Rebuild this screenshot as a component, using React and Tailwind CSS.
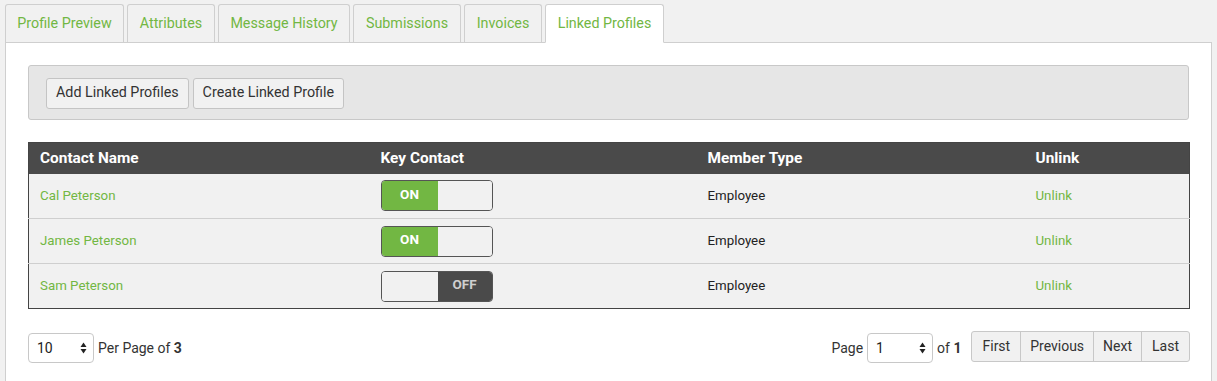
import React from "react";

const GREEN = "text-[#72b743]";

function Tab({ label, active, w }) {
  return (
    <div
      className={
        "h-[38px] flex items-center justify-center rounded-t-[3px] border border-[#cfcfcf] text-[14.3px] " +
        w +
        " " +
        GREEN +
        (active ? " bg-white border-b-white -mb-px relative z-10 h-[39px]" : " bg-[#f1f1f1] border-b-0")
      }
    >
      {label}
    </div>
  );
}

function Toggle({ on }) {
  return (
    <div className="w-[112px] h-[31px] rounded-[4px] border border-[#555] overflow-hidden flex text-[13.5px] font-bold">
      {on ? (
        <>
          <div className="w-[56px] bg-[#72b743] text-white flex items-center justify-center pb-[3px]">ON</div>
          <div className="flex-1 bg-[#f1f1f1]" />
        </>
      ) : (
        <>
          <div className="w-[56px] bg-[#f1f1f1]" />
          <div className="flex-1 bg-[#4a4a4a] text-[#cfcfcf] flex items-center justify-center pb-[3px]">OFF</div>
        </>
      )}
    </div>
  );
}

function Select({ value }) {
  return (
    <div className="w-[66px] h-[30px] border border-[#c8c8c8] rounded-[4px] bg-white flex items-center justify-between pl-[8px] pr-[6px] text-[14px] text-[#222]">
      <span>{value}</span>
      <svg width="7" height="12" viewBox="0 0 7 12">
        <path d="M3.5 0.5 L6.5 5 L0.5 5 Z" fill="#222" />
        <path d="M3.5 11.5 L6.5 7 L0.5 7 Z" fill="#222" />
      </svg>
    </div>
  );
}

const rows = [
  { name: "Cal Peterson", on: true },
  { name: "James Peterson", on: true },
  { name: "Sam Peterson", on: false },
];

export default function App() {
  return (
    <div className="w-[1217px] h-[381px] bg-[#f1f1f1] overflow-hidden font-['Roboto',sans-serif] pt-[4px] pl-[5px] pr-[5px]">
      <div className="flex gap-[3px] items-end">
        <Tab label="Profile Preview" w="w-[119px]" />
        <Tab label="Attributes" w="w-[88px]" />
        <Tab label="Message History" w="w-[132px]" />
        <Tab label="Submissions" w="w-[108px]" />
        <Tab label="Invoices" w="w-[78px]" />
        <Tab label="Linked Profiles" w="w-[119px]" active />
      </div>
      <div className="bg-white border border-[#cfcfcf] w-[1207px] h-[400px] px-[22px] pt-[22px]">
        <div className="h-[55px] bg-[#e6e6e6] border border-[#c8c8c8] rounded-[3px] flex items-center gap-[4px] px-[17px] pt-[1px]">
          <button className="h-[31px] px-[9px] bg-[#f1f1f1] border border-[#c4c4c4] rounded-[3px] text-[14.3px] text-[#333]">
            Add Linked Profiles
          </button>
          <button className="h-[31px] px-[9px] bg-[#f1f1f1] border border-[#c4c4c4] rounded-[3px] text-[14.3px] text-[#333]">
            Create Linked Profile
          </button>
        </div>

        <table className="mt-[22px] w-[1162px] border-collapse border border-[#444] table-fixed">
          <colgroup>
            <col className="w-[341px]" />
            <col className="w-[327px]" />
            <col className="w-[328px]" />
            <col />
          </colgroup>
          <thead>
            <tr className="bg-[#4a4a4a] h-[31px] text-white text-[15.4px] text-left">
              <th className="px-[11px] font-bold">Contact Name</th>
              <th className="px-[11px] font-bold">Key Contact</th>
              <th className="px-[11px] font-bold">Member Type</th>
              <th className="px-[11px] font-bold">Unlink</th>
            </tr>
          </thead>
          <tbody>
            {rows.map((r, i) => (
              <tr key={r.name} className={"h-[45px] bg-[#f1f1f1] text-[13.3px] " + (i < 2 ? "border-b border-[#cfcfcf]" : "")}>
                <td className={"px-[11px] " + GREEN}>{r.name}</td>
                <td className="px-[11px]">
                  <Toggle on={r.on} />
                </td>
                <td className="px-[11px] text-[#222]">Employee</td>
                <td className={"px-[11px] " + GREEN}>Unlink</td>
              </tr>
            ))}
          </tbody>
        </table>

        <div className="mt-[22px] flex items-start justify-between w-[1162px]">
          <div className="flex items-center gap-[4px] text-[14px] text-[#333] mt-[2px]">
            <Select value="10" />
            <span>
              Per Page of <b>3</b>
            </span>
          </div>
          <div className="flex items-start">
            <div className="flex items-center mt-[2px]">
              <span className="text-[14px] text-[#333] mr-[4px]">Page</span>
              <Select value="1" />
              <span className="text-[14px] text-[#333] ml-[4px] mr-[10px]">
                of <b>1</b>
              </span>
            </div>
            <div className="flex h-[31px] border border-[#c8c8c8] rounded-[3px] overflow-hidden bg-[#f1f1f1] text-[14px] text-[#333]">
              <div className="px-[10px] flex items-center border-r border-[#c8c8c8]">First</div>
              <div className="px-[9px] flex items-center border-r border-[#c8c8c8]">Previous</div>
              <div className="px-[9px] flex items-center border-r border-[#c8c8c8]">Next</div>
              <div className="px-[10px] flex items-center">Last</div>
            </div>
          </div>
        </div>
      </div>
    </div>
  );
}
